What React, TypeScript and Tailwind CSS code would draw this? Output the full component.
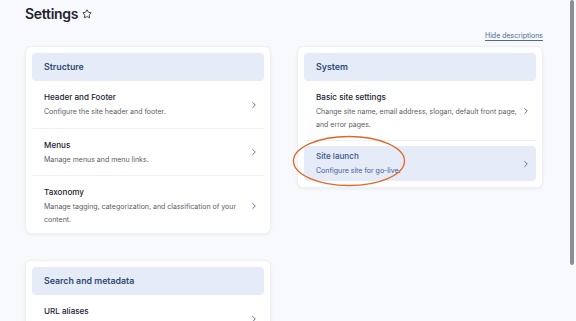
import React from "react";
import { Star, ChevronRight } from "lucide-react";

type Item = { title: string; desc: string; active?: boolean };

function Row({ item, last }: { item: Item; last?: boolean }) {
  if (item.active) {
    return (
      <div className="pt-[5px]">
        <div className="flex items-center justify-between rounded-[4px] bg-[#e5ebf7] pl-[12px] pr-[5px] py-[4px]">
          <div>
            <div className="text-[8.1px] leading-[12px] font-medium text-[#36558a]">{item.title}</div>
            <div className="mt-[3px] text-[7px] leading-[12px] text-[#3d5d94]">{item.desc}</div>
          </div>
          <ChevronRight size={10} strokeWidth={2} className="text-[#3b5a8c] shrink-0" />
        </div>
      </div>
    );
  }
  return (
    <div className={last ? "" : "border-b border-[#eef0f4]"}>
      <div
        className={
          "flex items-center justify-between pl-[12px] pr-[5px] pt-[10px] " +
          (last ? "pb-[1px]" : "pb-[9px]")
        }
      >
        <div className="min-w-0 flex-1">
          <div className="text-[8.1px] leading-[12px] font-medium text-[#222330]">{item.title}</div>
          <div className="mt-[3px] text-[7px] leading-[12.5px] text-[#5b5d63]">{item.desc}</div>
        </div>
        <ChevronRight size={10} strokeWidth={2} className="text-[#3b5a8c] shrink-0" />
      </div>
    </div>
  );
}

function Card({ title, items }: { title: string; items: Item[] }) {
  return (
    <div className="rounded-[6px] bg-white p-[6px] shadow-[0_1px_3px_rgba(0,0,0,0.06)] border border-[#eef0f5]">
      <div className="flex h-[28px] items-center rounded-[4px] bg-[#e5ebf7] px-[12px]">
        <span className="text-[8.8px] font-semibold text-[#2f4a73]">{title}</span>
      </div>
      {items.map((it, i) => (
        <Row key={it.title} item={it} last={i === items.length - 1} />
      ))}
    </div>
  );
}

export default function App() {
  return (
    <div
      className="flex h-[321px] w-[576px] overflow-hidden bg-[#f8f9fc]"
      style={{ fontFamily: "Inter, 'Noto Sans', sans-serif" }}
    >
      <div className="w-[568px] shrink-0 px-[25px]">
        <div className="flex h-[27px] items-center">
          <h1 className="text-[14px] font-semibold tracking-[-0.3px] text-[#222330]">Settings</h1>
          <Star size={10} strokeWidth={2} className="ml-[4px] mt-[1px] text-[#222330]" />
        </div>
        <div className="flex h-[19px] items-center justify-end">
          <span className="text-[7px] text-[#4e6a94] underline underline-offset-[1.5px]">Hide descriptions</span>
        </div>
        <div className="grid grid-cols-2 gap-x-[26px] items-start">
          <div className="flex flex-col gap-[26px]">
            <Card
              title="Structure"
              items={[
                { title: "Header and Footer", desc: "Configure the site header and footer." },
                { title: "Menus", desc: "Manage menus and menu links." },
                {
                  title: "Taxonomy",
                  desc: "Manage tagging, categorization, and classification of your content.",
                },
              ]}
            />
            <Card
              title="Search and metadata"
              items={[
                { title: "URL aliases", desc: "Change your site's URL paths." },
              ]}
            />
          </div>
          <div className="relative">
            <Card
              title="System"
              items={[
                {
                  title: "Basic site settings",
                  desc: "Change site name, email address, slogan, default front page, and error pages.",
                },
                { title: "Site launch", desc: "Configure site for go-live.", active: true },
              ]}
            />
            <svg
              className="pointer-events-none absolute left-[-5px] top-[89px]"
              width="114"
              height="52"
              viewBox="0 0 114 52"
            >
              <ellipse cx="57" cy="26" rx="55.5" ry="24.5" fill="none" stroke="#e0672a" strokeWidth="1.3" />
            </svg>
          </div>
        </div>
      </div>
      <div className="w-[8px] shrink-0 flex justify-center">
        <div className="h-[265px] w-[4px] rounded-full bg-[#8e8e8e]" />
      </div>
    </div>
  );
}
